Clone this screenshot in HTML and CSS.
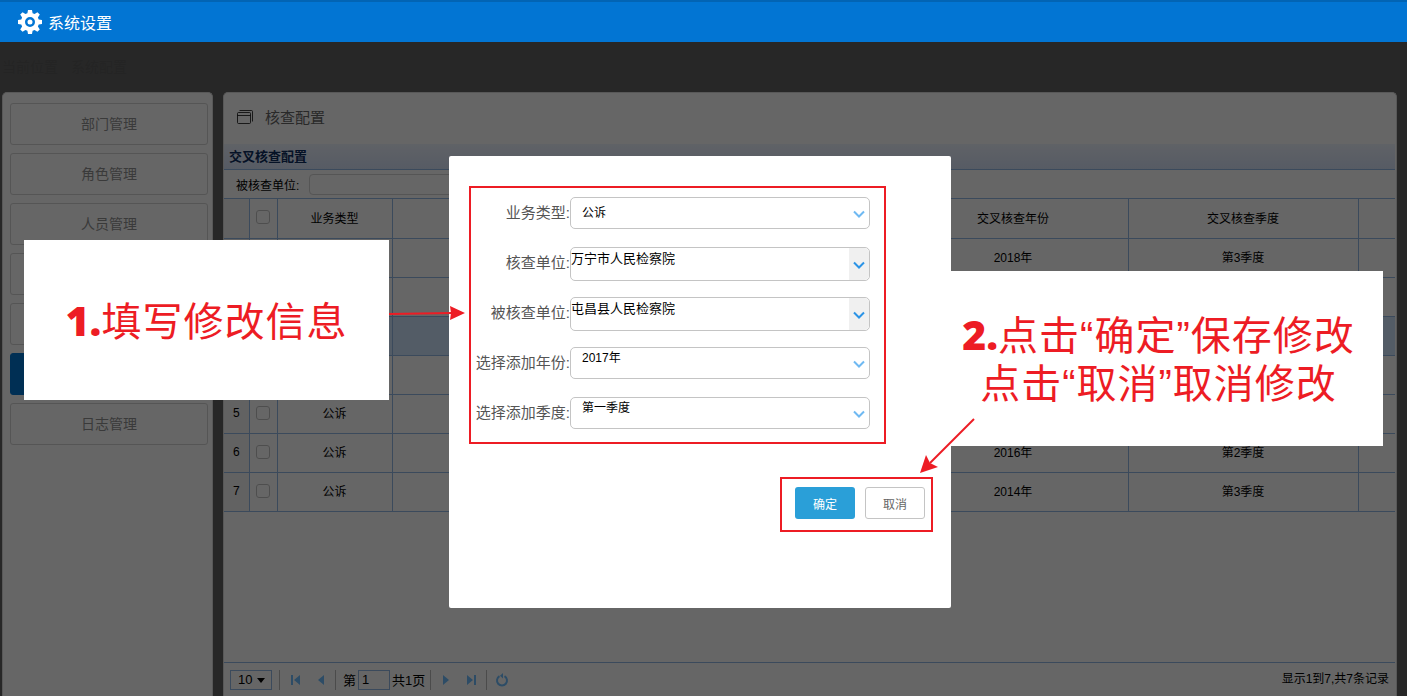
FILE: index.html
```html
<!DOCTYPE html>
<html lang="zh-CN">
<head>
    <meta charset="UTF-8" />
    <title>系统设置</title>
    <link rel="stylesheet" href="styles.css">
</head>
<body>
<header class="topbar">
    <svg class="gear" viewBox="0 0 24 24" width="24" height="24">
        <path fill="#fff" fill-rule="evenodd" d="M10 0h4l.6 3.300 2 .8L19.400 2.200l2.400 2.400-1.900 2.800.8 2 3.300.6v4l-3.300.6-.8 2 1.900 2.800-2.400 2.400-2.800-1.900-2 .8L14 24h-4l-.6-3.300-2-.8-2.800 1.900-2.400-2.400 1.900-2.800-.8-2L0 14v-4l3.300-.6.8-2-1.900-2.800 2.400-2.400 2.800 1.900 2-.8zM12 7a5 5 0 1 0 0 10 5 5 0 0 0 0-10zm0 2.500a2.500 2.500 0 1 1 0 5 2.500 2.500 0 0 1 0-5z"/>
    </svg>
    <span class="topbar-title">系统设置</span>
</header>

<div class="crumb">当前位置 <span class="crumb-cur">系统配置</span></div>

<div class="page">
    <aside class="side">
        <a class="side-btn">部门管理</a>
        <a class="side-btn">角色管理</a>
        <a class="side-btn">人员管理</a>
        <a class="side-btn"></a>
        <a class="side-btn"></a>
        <a class="side-btn active"></a>
        <a class="side-btn">日志管理</a>
    </aside>

    <main class="main">
        <div class="main-head">
            <svg viewBox="0 0 18 16" width="18" height="16" fill="none" stroke="#000" stroke-opacity=".75">
                <rect x="1.500" y="3.500" width="13" height="11" rx="1"/>
                <path d="M1.500 6.500h13M3.500 1.500h12a1 1 0 0 1 1 1v10"/>
            </svg>
            <span>核查配置</span>
        </div>
        <div class="grid-title">交叉核查配置</div>
        <div class="toolbar">
            <label>被核查单位:</label>
            <input class="toolbar-input" type="text">
        </div>
        <table class="grid">
            <colgroup>
                <col class="c-num"><col class="c-chk"><col class="c-type"><col class="c-a"><col class="c-b"><col class="c-year"><col class="c-season"><col>
            </colgroup>
            <tr class="head">
                <td class="num"></td><td><span class="chk"></span></td><td>业务类型</td><td></td><td></td><td>交叉核查年份</td><td>交叉核查季度</td><td></td>
            </tr>
            <tr><td class="num"></td><td><span class="chk"></span></td><td></td><td></td><td></td><td>2018年</td><td>第3季度</td><td></td></tr>
            <tr><td class="num"></td><td><span class="chk"></span></td><td></td><td></td><td></td><td></td><td></td><td></td></tr>
            <tr class="picked"><td class="num"></td><td><span class="chk"></span></td><td></td><td></td><td></td><td></td><td></td><td></td></tr>
            <tr><td class="num"></td><td><span class="chk"></span></td><td></td><td></td><td></td><td></td><td></td><td></td></tr>
            <tr><td class="num">5</td><td><span class="chk"></span></td><td>公诉</td><td></td><td></td><td></td><td></td><td></td></tr>
            <tr><td class="num">6</td><td><span class="chk"></span></td><td>公诉</td><td></td><td></td><td>2016年</td><td>第2季度</td><td></td></tr>
            <tr><td class="num">7</td><td><span class="chk"></span></td><td>公诉</td><td></td><td></td><td>2014年</td><td>第3季度</td><td></td></tr>
        </table>
        <div class="pager">
            <span class="pg-size">10<i class="caret"></i></span>
            <div class="pg-group pg-nav">
                <svg class="pg-ico" viewBox="0 0 12 14" width="12" height="14"><path d="M2 2h2v10H2zM11 2v10L5 7z"/></svg>
                <svg class="pg-ico" viewBox="0 0 12 14" width="12" height="14"><path d="M9 2v10L3 7z"/></svg>
            </div>
            <div class="pg-group pg-page">
                <span>第</span><span class="pg-input">1</span><span>共1页</span>
            </div>
            <div class="pg-group pg-nav">
                <svg class="pg-ico" viewBox="0 0 12 14" width="12" height="14"><path d="M3 2v10l6-5z"/></svg>
                <svg class="pg-ico" viewBox="0 0 12 14" width="12" height="14"><path d="M1 2v10l6-5zM8 2h2v10H8z"/></svg>
            </div>
            <div class="pg-group pg-last">
                <svg class="pg-ico" viewBox="0 0 14 14" width="14" height="14"><path fill="none" stroke="#70bfff" stroke-width="2" d="M4.500 3.200a5 5 0 1 0 5 0"/><path d="M8 0v5.500L5 2.700z"/></svg>
            </div>
            <span class="pg-info">显示1到7,共7条记录</span>
        </div>
    </main>
</div>

<div class="mask"></div>

<section class="modal">
    <div class="form-box">
        <div class="form-row">
            <label>业务类型:</label>
            <div class="sel"><span>公诉</span><svg class="chev" viewBox="0 0 12 8" width="12" height="8"><path d="M1 1.500l5 5 5-5"/></svg></div>
        </div>
        <div class="form-row">
            <label>核查单位:</label>
            <div class="sel combo"><span>万宁市人民检察院</span><b class="combo-arrow"><svg class="chev" viewBox="0 0 12 8" width="12" height="8"><path d="M1 1.500l5 5 5-5"/></svg></b></div>
        </div>
        <div class="form-row">
            <label>被核查单位:</label>
            <div class="sel combo"><span>屯昌县人民检察院</span><b class="combo-arrow"><svg class="chev" viewBox="0 0 12 8" width="12" height="8"><path d="M1 1.500l5 5 5-5"/></svg></b></div>
        </div>
        <div class="form-row">
            <label>选择添加年份:</label>
            <div class="sel high"><span>2017年</span><svg class="chev" viewBox="0 0 12 8" width="12" height="8"><path d="M1 1.500l5 5 5-5"/></svg></div>
        </div>
        <div class="form-row">
            <label>选择添加季度:</label>
            <div class="sel high"><span>第一季度</span><svg class="chev" viewBox="0 0 12 8" width="12" height="8"><path d="M1 1.500l5 5 5-5"/></svg></div>
        </div>
    </div>
    <div class="btn-box">
        <button class="btn ok">确定</button>
        <button class="btn cancel">取消</button>
    </div>
</section>

<div class="note note-left"><b>1.</b>填写修改信息</div>
<div class="note note-right">
    <div><b>2.</b>点击“确定”保存修改</div>
    <div>点击“取消”取消修改</div>
</div>

<svg class="arrows" width="1407" height="696" viewBox="0 0 1407 696">
    <path d="M389 314L452 313" stroke="#ed1c24" stroke-width="2" fill="none"/>
    <path d="M465 313l-15-7 1 7-1 7z" fill="#ed1c24"/>
    <path d="M974 419L930 463" stroke="#ed1c24" stroke-width="2" fill="none"/>
    <path d="M920 473l6-18 4 8 8 4z" fill="#ed1c24"/>
</svg>
</body>
</html>
```
FILE: styles.css
```css
* {
    box-sizing: border-box;
}
html, body {
    height: 696px;
    overflow: hidden;
}
body {
    margin: 0;
    background: #626262;
    font-family: "Liberation Sans", "Noto Sans CJK SC", sans-serif;
    font-size: 12px;
    color: #000;
}
.topbar {
    height: 42px;
    background: #0275d3;
    border-top: 2px solid #0264b4;
    display: flex;
    align-items: center;
    padding-left: 18px;
    color: #fff;
}
.gear {
    margin-right: 6px;
}
.topbar-title {
    font-size: 16px;
}
.crumb {
    height: 50px;
    padding: 14px 0 0 2px;
    font-size: 14px;
    color: #5a5a5a;
}
.crumb-cur {
    margin-left: 9px;
}
.page {
    display: flex;
    gap: 10px;
    padding: 0 10px 0 2px;
    height: 604px;
}
.side {
    flex: none;
    width: 211px;
    background: #fff;
    border: 1px solid #ddd;
    border-bottom: 0;
    border-radius: 5px 5px 0 0;
    padding: 10px 4px 0 7px;
    display: flex;
    flex-direction: column;
    gap: 8px;
}
.side-btn {
    height: 42px;
    line-height: 40px;
    text-align: center;
    border: 1px solid #d4d4d4;
    border-radius: 3px;
    font-size: 14px;
    color: #919191;
}
.side-btn.active {
    background: #0275d3;
    border-color: #0275d3;
    color: #fff;
}
.main {
    flex: 1;
    min-width: 0;
    background: #fff;
    border: 1px solid #ddd;
    border-bottom: 0;
    border-radius: 5px 5px 0 0;
    display: flex;
    flex-direction: column;
    padding-right: 1px;
}
.main-head {
    height: 51px;
    display: flex;
    align-items: center;
    padding: 0 0 4px 12px;
    gap: 11px;
    font-size: 15px;
    color: #666;
}
.grid-title {
    height: 26px;
    line-height: 25px;
    padding-left: 5px;
    font-size: 13px;
    font-weight: bold;
    color: #0e2d5f;
    background: linear-gradient(#eff5ff, #d8e4fb);
    border-bottom: 1px solid #95b8e7;
}
.toolbar {
    height: 28px;
    display: flex;
    align-items: center;
    padding-left: 12px;
    gap: 10px;
}
.toolbar-input {
    width: 300px;
    height: 21px;
    border: 1px solid #d4d4d4;
    border-radius: 4px;
}
.grid {
    width: 100%;
    border-collapse: collapse;
    table-layout: fixed;
    border-top: 1px solid #95b8e7;
}
.grid td {
    height: 39px;
    text-align: center;
    border-bottom: 1px solid #95b8e7;
    border-right: 1px solid #95b8e7;
    padding: 0 0 3px;
}
.grid .head td {
    height: 40px;
}
.grid td:last-child {
    border-right: 0;
}
.grid .num {
    background: #f4f4f4;
}
.grid .picked td {
    background: #cfe6ff;
}
.c-num { width: 25px; }
.c-chk { width: 28px; }
.c-type { width: 115px; }
.c-a { width: 256px; }
.c-b { width: 250px; }
.c-year { width: 230px; }
.c-season { width: 230px; }
.chk {
    display: inline-block;
    width: 14px;
    height: 14px;
    background: #fff;
    border: 1px solid #c4c4c4;
    border-radius: 3px;
    vertical-align: middle;
}
.pager {
    margin-top: auto;
    height: 34px;
    border-top: 1px solid #95b8e7;
    display: flex;
    align-items: center;
    padding-left: 6px;
    font-size: 13px;
}
.pg-size {
    flex: none;
    width: 42px;
    height: 20px;
    border: 1px solid #95b8e7;
    line-height: 18px;
    padding-left: 7px;
    position: relative;
    margin-right: 7px;
}
.caret {
    position: absolute;
    right: 6px;
    top: 7px;
    border: 4px solid transparent;
    border-top: 5px solid #000;
    border-bottom: 0;
}
.pg-group {
    display: flex;
    align-items: center;
    height: 20px;
    border-left: 1px solid #bbb;
}
.pg-nav {
    gap: 14px;
    padding: 0 8px 0 9px;
}
.pg-page {
    gap: 2px;
    width: 95px;
    padding-left: 7px;
}
.pg-page span {
    white-space: nowrap;
}
.pg-last {
    padding-left: 8px;
}
.pg-ico {
    fill: #70bfff;
}
.pg-input {
    width: 32px;
    height: 20px;
    border: 1px solid #95b8e7;
    line-height: 18px;
    padding-left: 3px;
}
.pg-info {
    margin-left: auto;
    margin-right: 6px;
    font-size: 12px;
    padding-bottom: 4px;
}
.mask {
    position: absolute;
    left: 0;
    top: 42px;
    width: 1407px;
    height: 654px;
    background: rgba(0, 0, 0, .6);
}
.modal {
    position: absolute;
    left: 449px;
    top: 156px;
    width: 502px;
    height: 452px;
    background: #fff;
    border-radius: 2px;
}
.form-box {
    position: absolute;
    left: 20px;
    top: 30px;
    width: 417px;
    height: 258px;
    border: 2px solid #ed1c24;
    padding: 9px 14px 0 0;
}
.form-row {
    display: flex;
    height: 50px;
    justify-content: flex-end;
}
.form-row label {
    font-size: 15px;
    color: #555;
    line-height: 31px;
    white-space: nowrap;
}
.sel {
    flex: none;
    width: 300px;
    height: 32px;
    border: 1px solid #c4c4c4;
    border-radius: 5px;
    padding-left: 11px;
    line-height: 30px;
    position: relative;
    color: #000;
}
.sel.high {
    line-height: 20px;
}
.sel.combo {
    height: 34px;
    padding-left: 0;
    font-size: 13px;
    line-height: 22px;
}
.chev {
    position: absolute;
    right: 4px;
    top: 12px;
    fill: none;
    stroke: #6fb9f2;
    stroke-width: 2;
}
.combo-arrow {
    position: absolute;
    right: 0;
    top: 0;
    width: 20px;
    height: 32px;
    background: #f0f0f0;
    border-radius: 0 5px 5px 0;
}
.combo-arrow .chev {
    stroke: #2a93e6;
    top: 13px;
    right: 4px;
}
.btn-box {
    position: absolute;
    left: 331px;
    top: 321px;
    width: 153px;
    height: 55px;
    border: 2px solid #ed1c24;
    display: flex;
    gap: 10px;
    padding: 8px 0 0 13px;
}
.btn {
    width: 60px;
    height: 32px;
    border-radius: 3px;
    font-family: inherit;
    font-size: 12px;
    padding: 0;
}
.btn.ok {
    background: #2a9fd8;
    border: 0;
    color: #fff;
}
.btn.cancel {
    background: #fff;
    border: 1px solid #c4c4c4;
    color: #666;
}
.note {
    position: absolute;
    background: #fff;
    color: #ed1c24;
    font-size: 40px;
    letter-spacing: 1px;
    white-space: nowrap;
    text-align: center;
}
.note b {
    font-size: 41px;
    font-weight: 800;
    letter-spacing: 0;
    font-family: "Open Sans", sans-serif;
}
.note-left {
    left: 24px;
    top: 240px;
    width: 365px;
    height: 160px;
    line-height: 160px;
}
.note-right {
    left: 919px;
    top: 271px;
    width: 464px;
    height: 175px;
    padding-top: 39px;
    padding-left: 15px;
    line-height: 48px;
}
.arrows {
    position: absolute;
    left: 0;
    top: 0;
}
```
